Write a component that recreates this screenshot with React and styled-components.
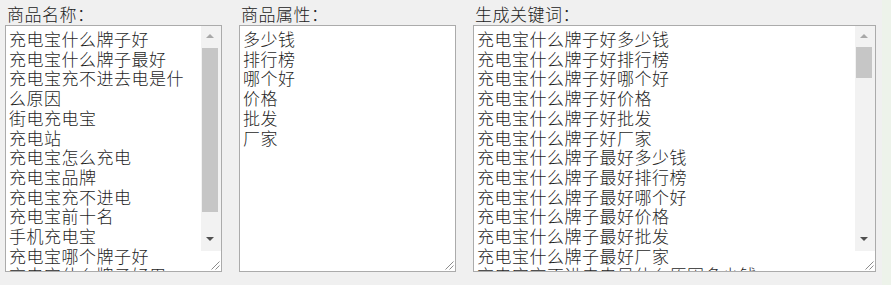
import React from "react";
import styled, { createGlobalStyle } from "styled-components";

const Global = createGlobalStyle`
  html, body { margin: 0; padding: 0; background: #f0f0f0; }
  body { font-family: "Noto Sans CJK SC", "Noto Sans", sans-serif; }
`;

const Page = styled.div`
  display: flex;
  flex-direction: row;
  align-items: flex-start;
  height: 285px;
  box-sizing: border-box;
  padding: 3px 0 0 5px;
  background: #f0f0f0;
  overflow: hidden;
`;

const Column = styled.div`
  display: flex;
  flex-direction: column;
  width: ${(p) => p.$width}px;
  margin-right: ${(p) => p.$gap || 0}px;
  flex: none;
`;

const Label = styled.div`
  height: 22px;
  line-height: 22px;
  padding-left: 2px;
  font-size: 17px;
  font-weight: 300;
  letter-spacing: 0.5px;
  color: #222222;
  white-space: nowrap;
`;

const Field = styled.div`
  position: relative;
  display: flex;
  flex-direction: row;
  height: 247px;
  box-sizing: border-box;
  border: 1px solid #ababab;
  background: #ffffff;
  overflow: hidden;
`;

const Content = styled.div`
  flex: 1;
  min-width: 0;
  padding: 3px 4px 0 3px;
  font-size: 17px;
  font-weight: 300;
  line-height: 19.7px;
  letter-spacing: 0.5px;
  color: #1f1f1f;
  white-space: pre-wrap;
  word-break: break-all;
  overflow: hidden;
`;

const Scrollbar = styled.div`
  width: 20px;
  flex: none;
  display: flex;
  flex-direction: column;
  background: #f2f2f2;
`;

const ArrowButton = styled.div`
  height: ${(p) => p.$h}px;
  flex: none;
  display: flex;
  align-items: center;
  justify-content: center;
  padding-right: 2px;
  &::after {
    content: "";
    width: 0;
    height: 0;
    border-left: 4px solid transparent;
    border-right: 4px solid transparent;
    ${(p) =>
      p.$dir === "up"
        ? `border-bottom: 4px solid ${p.$disabled ? "#a8a8a8" : "#505050"};`
        : `border-top: 4px solid ${p.$disabled ? "#a8a8a8" : "#505050"};`}
  }
`;

const Track = styled.div`
  flex: 1;
  display: flex;
  flex-direction: column;
`;

const Thumb = styled.div`
  margin: ${(p) => p.$top}px 3px 0 1px;
  height: ${(p) => p.$h}px;
  background: #c6c6c6;
`;

const Corner = styled.div`
  height: 20px;
  flex: none;
  background: #ffffff;
  display: flex;
  align-items: flex-end;
  justify-content: flex-end;
`;

const FloatingGrip = styled.div`
  position: absolute;
  right: 0;
  bottom: 0;
  width: 20px;
  height: 20px;
  display: flex;
  align-items: flex-end;
  justify-content: flex-end;
`;

const Edge = styled.div`
  flex: 1;
  align-self: stretch;
  margin: -3px 0 0 6px;
  height: 285px;
  background: #edf3ea;
`;

const GripIcon = () => (
  <svg width="20" height="20" viewBox="0 0 20 20">
    <line x1="18.5" y1="10.5" x2="10.5" y2="18.5" stroke="#8c8c8c" strokeWidth="1" />
    <line x1="18.5" y1="14.5" x2="14.5" y2="18.5" stroke="#8c8c8c" strokeWidth="1" />
  </svg>
);

const names = [
  "充电宝什么牌子好",
  "充电宝什么牌子最好",
  "充电宝充不进去电是什么原因",
  "街电充电宝",
  "充电站",
  "充电宝怎么充电",
  "充电宝品牌",
  "充电宝充不进电",
  "充电宝前十名",
  "手机充电宝",
  "充电宝哪个牌子好",
  "充电宝什么牌子好用",
];

const attrs = ["多少钱", "排行榜", "哪个好", "价格", "批发", "厂家"];

const keywords = [];
names.forEach((n) => attrs.forEach((a) => keywords.push(n + a)));

const ScrollColumn = ({ thumbTop, thumbHeight }) => (
  <Scrollbar>
    <ArrowButton $dir="up" $h={20} $disabled />
    <Track>
      <Thumb $top={thumbTop} $h={thumbHeight} />
    </Track>
    <ArrowButton $dir="down" $h={25} />
    <Corner>
      <GripIcon />
    </Corner>
  </Scrollbar>
);

export default function App() {
  return (
    <>
      <Global />
      <Page>
        <Column $width={217} $gap={17}>
          <Label>商品名称：</Label>
          <Field>
            <Content>{names.join("\n")}</Content>
            <ScrollColumn thumbTop={2} thumbHeight={164} />
          </Field>
        </Column>
        <Column $width={217} $gap={17}>
          <Label>商品属性：</Label>
          <Field>
            <Content>{attrs.join("\n")}</Content>
            <FloatingGrip>
              <GripIcon />
            </FloatingGrip>
          </Field>
        </Column>
        <Column $width={403}>
          <Label>生成关键词：</Label>
          <Field>
            <Content>{keywords.join("\n")}</Content>
            <ScrollColumn thumbTop={1} thumbHeight={31} />
          </Field>
        </Column>
        <Edge />
      </Page>
    </>
  );
}
